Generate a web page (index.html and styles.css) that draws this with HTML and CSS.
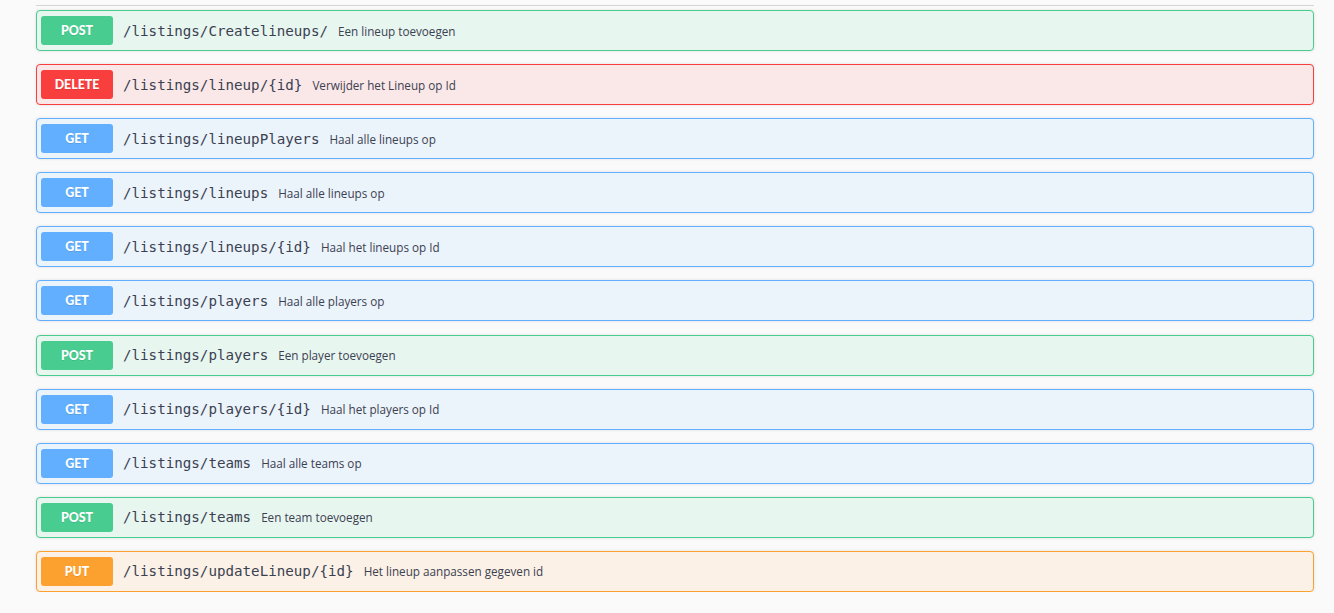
FILE: index.html
```html
<!DOCTYPE html>
<html lang="nl">
<head>
<meta charset="utf-8">
<title>Listings API</title>
<link rel="stylesheet" href="styles.css">
</head>
<body>
<div class="wrapper">
  <div class="tag-line"></div>
  <div class="ops">
    <div class="op op-post"><span class="method">POST</span><span class="path">/listings/Createlineups/</span><span class="desc">Een lineup toevoegen</span></div>
    <div class="op op-delete"><span class="method">DELETE</span><span class="path">/listings/lineup/{id}</span><span class="desc">Verwijder het Lineup op Id</span></div>
    <div class="op op-get"><span class="method">GET</span><span class="path">/listings/lineupPlayers</span><span class="desc">Haal alle lineups op</span></div>
    <div class="op op-get"><span class="method">GET</span><span class="path">/listings/lineups</span><span class="desc">Haal alle lineups op</span></div>
    <div class="op op-get"><span class="method">GET</span><span class="path">/listings/lineups/{id}</span><span class="desc">Haal het lineups op Id</span></div>
    <div class="op op-get"><span class="method">GET</span><span class="path">/listings/players</span><span class="desc">Haal alle players op</span></div>
    <div class="op op-post"><span class="method">POST</span><span class="path">/listings/players</span><span class="desc">Een player toevoegen</span></div>
    <div class="op op-get"><span class="method">GET</span><span class="path">/listings/players/{id}</span><span class="desc">Haal het players op Id</span></div>
    <div class="op op-get"><span class="method">GET</span><span class="path">/listings/teams</span><span class="desc">Haal alle teams op</span></div>
    <div class="op op-post"><span class="method">POST</span><span class="path">/listings/teams</span><span class="desc">Een team toevoegen</span></div>
    <div class="op op-put"><span class="method">PUT</span><span class="path">/listings/updateLineup/{id}</span><span class="desc">Het lineup aanpassen gegeven id</span></div>
  </div>
</div>
</body>
</html>
```
FILE: styles.css
```css
html, body {
  margin: 0;
  padding: 0;
  background: #fafafa;
}
.wrapper {
  width: 1278px;
  margin-left: 36px;
}
.tag-line {
  height: 5px;
  border-bottom: 1px solid #d3d5d9;
}
.ops {
  display: flex;
  flex-direction: column;
  gap: 13.1px;
  padding-top: 4px;
}
.op {
  box-sizing: border-box;
  height: 41px;
  display: flex;
  align-items: center;
  padding: 0 4px;
  border: 1px solid;
  border-radius: 4px;
  box-shadow: 0 0 3px rgba(0, 0, 0, 0.12);
}
.method {
  box-sizing: border-box;
  width: 72px;
  height: 29px;
  display: flex;
  align-items: center;
  justify-content: center;
  border-radius: 3px;
  color: #fff;
  font-family: Lato, "Open Sans", sans-serif;
  font-weight: 900;
  font-size: 12.4px;
  text-shadow: 0 1px 0 rgba(0, 0, 0, 0.1);
}
.path {
  padding: 0 10px;
  font-family: "DejaVu Sans Mono", "Liberation Mono", monospace;
  font-size: 14.2px;
  font-weight: 400;
  color: #3b4151;
}
.desc {
  font-family: "Open Sans", sans-serif;
  font-size: 11.7px;
  color: #3b4151;
}
.op-post { background: #e8f6f0; border-color: #49cc90; }
.op-post .method { background: #49cc90; }
.op-delete { background: #fae7e7; border-color: #f93e3e; }
.op-delete .method { background: #f93e3e; }
.op-get { background: #ebf3fb; border-color: #61affe; }
.op-get .method { background: #61affe; }
.op-put { background: #fbf1e6; border-color: #fca130; }
.op-put .method { background: #fca130; }
```
